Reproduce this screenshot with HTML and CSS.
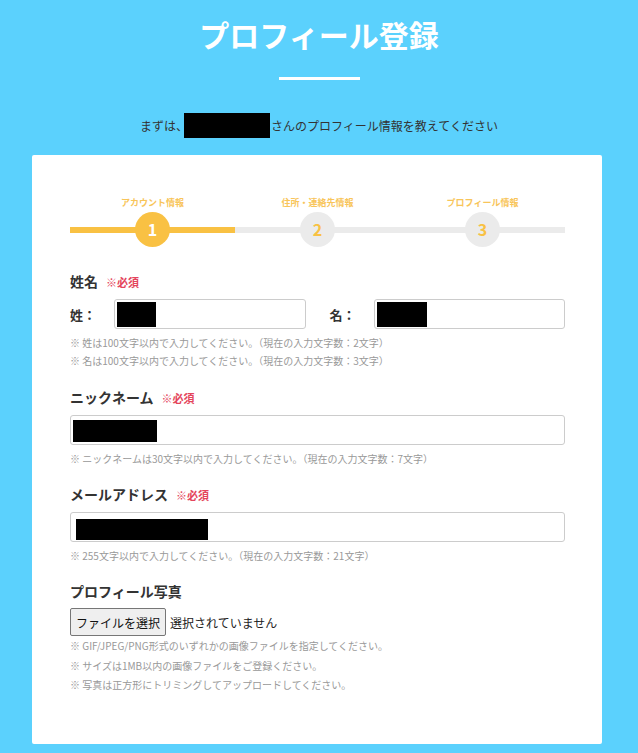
FILE: index.html
```html
<!DOCTYPE html>
<html lang="ja">
<head>
  <meta charset="UTF-8">
  <title>プロフィール登録</title>
  <link rel="stylesheet" href="styles.css">
</head>
<body>

<!-- Page heading -->
<header class="page-head">
  <h1>プロフィール登録</h1>
  <div class="head-rule"></div>
  <p class="lead">まずは、<span class="mask mask-name"></span>さんのプロフィール情報を教えてください</p>
</header>

<main class="card">

  <!-- Steps -->
  <div class="steps">
    <div class="step done">
      <div class="step-label">アカウント情報</div>
      <div class="step-track"><span class="step-dot">1</span></div>
    </div>
    <div class="step">
      <div class="step-label">住所・連絡先情報</div>
      <div class="step-track"><span class="step-dot">2</span></div>
    </div>
    <div class="step">
      <div class="step-label">プロフィール情報</div>
      <div class="step-track"><span class="step-dot">3</span></div>
    </div>
  </div>

  <!-- Name -->
  <section class="field field-name">
    <h2 class="field-title">姓名<span class="req">※必須</span></h2>
    <div class="name-row">
      <div class="name-half">
        <label class="name-label">姓：</label>
        <div class="text-box"><span class="mask mask-last"></span></div>
      </div>
      <div class="name-half">
        <label class="name-label">名：</label>
        <div class="text-box"><span class="mask mask-first"></span></div>
      </div>
    </div>
    <p class="note">※ 姓は100文字以内で入力してください。（現在の入力文字数：2文字）</p>
    <p class="note">※ 名は100文字以内で入力してください。（現在の入力文字数：3文字）</p>
  </section>

  <!-- Nickname -->
  <section class="field field-nick">
    <h2 class="field-title">ニックネーム<span class="req">※必須</span></h2>
    <div class="text-box"><span class="mask mask-nick"></span></div>
    <p class="note">※ ニックネームは30文字以内で入力してください。（現在の入力文字数：7文字）</p>
  </section>

  <!-- Mail -->
  <section class="field">
    <h2 class="field-title">メールアドレス<span class="req">※必須</span></h2>
    <div class="text-box"><span class="mask mask-mail"></span></div>
    <p class="note">※ 255文字以内で入力してください。（現在の入力文字数：21文字）</p>
  </section>

  <!-- Photo -->
  <section class="field">
    <h2 class="field-title">プロフィール写真</h2>
    <div class="file-row">
      <button class="file-button" type="button">ファイルを選択</button>
      <span class="file-name">選択されていません</span>
    </div>
    <div class="photo-notes">
      <p class="note">※ GIF/JPEG/PNG形式のいずれかの画像ファイルを指定してください。</p>
      <p class="note">※ サイズは1MB以内の画像ファイルをご登録ください。</p>
      <p class="note">※ 写真は正方形にトリミングしてアップロードしてください。</p>
    </div>
  </section>

</main>

</body>
</html>
```

FILE: styles.css
```css
body {
  margin: 0;
  padding: 0 0 10px;
  background: #5bd1fd;
  font-family: "Noto Sans CJK JP", "Noto Sans", sans-serif;
  color: #333;
}

/* Heading */
.page-head {
  text-align: center;
  padding-top: 13px;
}

.page-head h1 {
  margin: 0;
  font-size: 30px;
  line-height: 42px;
  font-weight: bold;
  color: #fff;
}

.head-rule {
  width: 81px;
  height: 3px;
  background: #fff;
  margin: 22px auto 0;
}

.lead {
  margin: 33px 0 0;
  font-size: 12px;
  line-height: 25px;
  color: #333;
}

.mask {
  display: inline-block;
  background: #000;
  vertical-align: top;
}

.mask-name { width: 86px; height: 25px; margin: 0 1px 0 -4px; }

/* Card */
.card {
  width: 495px;
  margin: 17px 0 0 32px;
  padding: 40px 37px 49px 38px;
  background: #fff;
  border-radius: 2px;
}

/* Steps */
.steps {
  display: flex;
}

.step {
  flex: 1;
  text-align: center;
}

.step-label {
  font-size: 9px;
  line-height: 14px;
  font-weight: bold;
  color: #f8c55a;
  padding-top: 1px;
}

.step-track {
  margin-top: 2px;
  height: 35px;
  display: flex;
  justify-content: center;
  background: linear-gradient(to bottom, transparent 15px, #ebebeb 15px, #ebebeb 21px, transparent 21px);
}

.step-dot {
  width: 35px;
  height: 35px;
  border-radius: 50%;
  background: #ebebeb;
  color: #f8c143;
  font-size: 16px;
  line-height: 35px;
  font-weight: bold;
}

.step.done .step-track {
  background: linear-gradient(to bottom, transparent 15px, #f9c143 15px, #f9c143 21px, transparent 21px);
}

.step.done .step-dot {
  background: #f9c143;
  color: #fff;
}

/* Fields */
.field {
  margin-top: 16px;
}

.field-name {
  margin-top: 24px;
}

.field-nick {
  margin-top: 17px;
}

.field-title {
  margin: 0 0 7px;
  font-size: 14px;
  line-height: 20px;
  font-weight: bold;
  color: #333;
}

.req {
  margin-left: 8px;
  font-size: 11px;
  font-weight: bold;
  color: #e4455c;
}

.name-row {
  display: flex;
  gap: 24px;
}

.name-half {
  flex: 1;
  display: flex;
  align-items: center;
}

.name-label {
  width: 44px;
  font-size: 13px;
  font-weight: bold;
  color: #333;
}

.text-box {
  flex: 1;
  height: 30px;
  box-sizing: border-box;
  border: 1px solid #ccc;
  border-radius: 3px;
  padding: 2px 2px;
}

.mask-last { width: 39px; height: 25px; }
.mask-first { width: 50px; height: 25px; }
.mask-nick { width: 84px; height: 22px; margin-top: 2px; }
.mask-mail { width: 132px; height: 21px; margin: 4px 0 0 3px; }

.note {
  margin: 0;
  font-size: 10px;
  line-height: 18px;
  color: #999;
}

.text-box + .note,
.name-row + .note {
  margin-top: 5px;
}

/* File input */
.file-row {
  display: flex;
  align-items: center;
  margin-top: 6px;
}

.file-button {
  height: 28px;
  padding: 0 5px;
  font-family: "Noto Sans CJK JP", sans-serif;
  font-size: 12px;
  color: #111;
  background: #efefef;
  border: 1px solid #767676;
  border-radius: 2px;
}

.file-name {
  margin-left: 4px;
  font-size: 12px;
  color: #222;
}

.photo-notes .note {
  line-height: 19.5px;
}
```
